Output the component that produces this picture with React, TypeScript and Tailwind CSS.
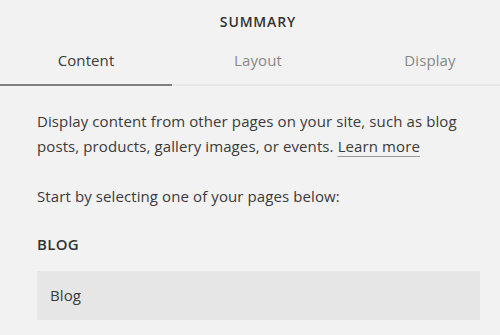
const tabs = ['Content', 'Layout', 'Display'];

export default function App() {
  return (
    <div className="w-[500px] h-[335px] overflow-hidden bg-[#f2f2f2]">
      <div className="w-[516px] font-['Open_Sans',sans-serif] text-[#3a3a3a] tracking-[0.1px]">
        {/* Header */}
        <div className="pt-[13px] text-center text-[14px] leading-[18px] font-semibold tracking-[0.06em] text-[#333]">
          SUMMARY
        </div>

        {/* Tabs */}
        <div className="mt-[19px] flex border-b-2 border-[#e8e8e8]">
          {tabs.map((tab, i) => (
            <div
              key={tab}
              className={
                i === 0
                  ? 'w-[172px] -mb-[2px] pb-[14px] text-center text-[15px] leading-[20px] text-[#3a3a3a] border-b-2 border-[#808080]'
                  : 'w-[172px] pb-[14px] text-center text-[15px] leading-[20px] text-[#888]'
              }
            >
              {tab}
            </div>
          ))}
        </div>

        {/* Body */}
        <div className="pl-[37px] pr-[36px]">
          <p className="mt-[23px] text-[15px] leading-[25px]">
            Display content from other pages on your site, such as blog posts, products, gallery images, or events.{' '}
            <a className="underline decoration-[#999] underline-offset-[4px]">Learn more</a>
          </p>
          <p className="mt-[25px] text-[15px] leading-[25px]">Start by selecting one of your pages below:</p>

          <div className="mt-[23px] text-[15px] leading-[25px] font-semibold tracking-[0.02em] text-[#333]">BLOG</div>

          <div className="mt-[14px] h-[49px] flex items-center px-[13px] bg-[#e6e6e6] text-[15px]">Blog</div>
        </div>
      </div>
    </div>
  );
}
